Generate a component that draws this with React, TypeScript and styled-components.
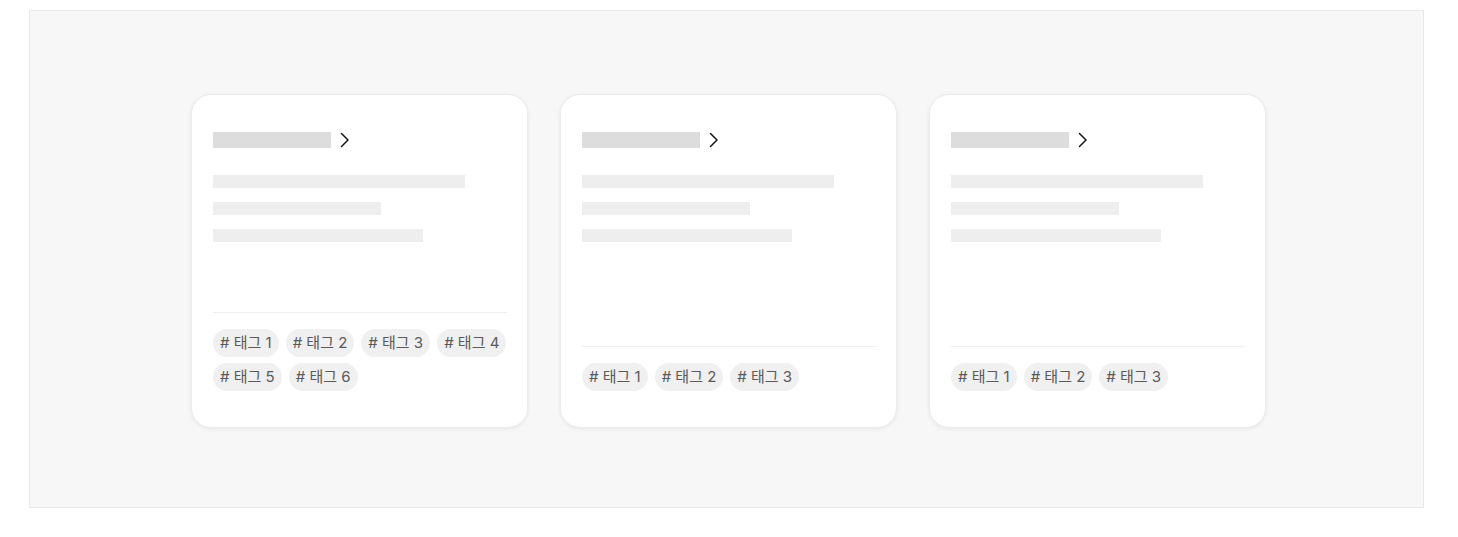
import styled, { createGlobalStyle } from "styled-components";

const GlobalStyle = createGlobalStyle`
  html, body {
    margin: 0;
    padding: 0;
    background: #ffffff;
    font-family: Inter, "Noto Sans CJK KR", sans-serif;
  }
`;

type CardData = {
  tags: string[];
};

const cards: CardData[] = [
  { tags: ["태그 1", "태그 2", "태그 3", "태그 4", "태그 5", "태그 6"] },
  { tags: ["태그 1", "태그 2", "태그 3"] },
  { tags: ["태그 1", "태그 2", "태그 3"] },
];

const lineWidths = [252, 168, 210];

const ChevronIcon = () => (
  <Chevron width="10" height="16" viewBox="0 0 10 16" fill="none">
    <path
      d="M1.5 1.5 L8 8 L1.5 14.5"
      stroke="#151515"
      strokeWidth="1.5"
      strokeLinecap="round"
      strokeLinejoin="round"
    />
  </Chevron>
);

const App = () => {
  return (
    <>
      <GlobalStyle />
      <Page>
        <Frame>
          {cards.map((card, i) => (
            <Card key={i}>
              <CardBody>
                <TitleRow>
                  <TitleBar />
                  <ChevronIcon />
                </TitleRow>
                <Lines>
                  {lineWidths.map((w) => (
                    <Line key={w} $width={w} />
                  ))}
                </Lines>
              </CardBody>
              <TagList>
                {card.tags.map((tag) => (
                  <Tag key={tag}># {tag}</Tag>
                ))}
              </TagList>
            </Card>
          ))}
        </Frame>
      </Page>
    </>
  );
};

export default App;

const Page = styled.div`
  padding: 10px 34px 29px 29px;
`;

const Frame = styled.div`
  background: #f7f7f7;
  border: 1px solid #e9e9e9;
  padding: 83px 0 79px 4px;
  display: flex;
  justify-content: center;
  align-items: stretch;
  gap: 32px;
`;

const Card = styled.div`
  width: 337px;
  box-sizing: border-box;
  background: #ffffff;
  border: 1px solid #ececec;
  border-radius: 20px;
  box-shadow: 0 1px 4px rgba(0, 0, 0, 0.07);
  padding: 36px 20px 36px 21px;
  display: flex;
  flex-direction: column;
`;

const CardBody = styled.div`
  flex: 1;
  padding-bottom: 70px;
`;

const TitleRow = styled.div`
  height: 18px;
  display: flex;
  align-items: center;
`;

const TitleBar = styled.div`
  width: 118px;
  height: 16px;
  background: #dddddd;
`;

const Chevron = styled.svg`
  margin-left: 9px;
  display: block;
`;

const Lines = styled.div`
  margin-top: 26px;
  display: flex;
  flex-direction: column;
  gap: 14px;
`;

const Line = styled.div<{ $width: number }>`
  width: ${(p) => p.$width}px;
  height: 13px;
  background: #eeeeee;
`;

const TagList = styled.div`
  border-top: 1px solid #efefef;
  padding-top: 16px;
  display: flex;
  flex-wrap: wrap;
  column-gap: 7px;
  row-gap: 6px;
`;

const Tag = styled.span`
  display: inline-block;
  padding: 4px 7px;
  line-height: 20px;
  font-size: 15px;
  color: #5a5a5a;
  background: #f0f0f0;
  border-radius: 999px;
  white-space: nowrap;
`;
